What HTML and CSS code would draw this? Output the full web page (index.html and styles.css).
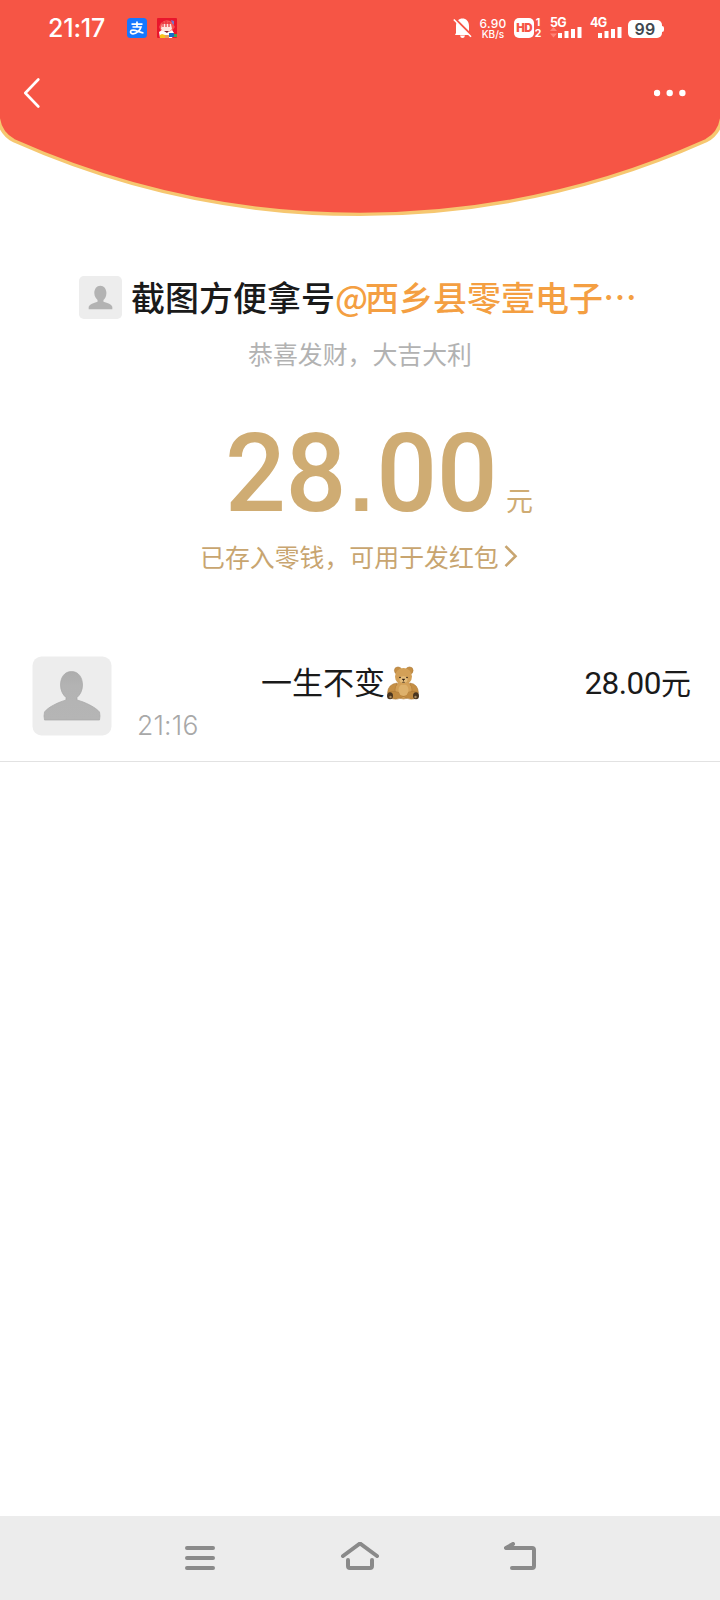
FILE: index.html
```html
<!DOCTYPE html>
<html lang="zh-CN">
<head>
<meta charset="utf-8">
<title>红包详情</title>
<link rel="stylesheet" href="styles.css">
</head>
<body>
<div class="screen">
  <header class="hero">
    <svg class="hero-bg" width="720" height="220" viewBox="0 0 720 220">
      <path d="M-2 -4V116C-1 127 5 136 14 140.800A850 850 0 0 0 706 140.800C715 136 721 127 722 116V-4Z" fill="#f65545" stroke="#f6c770" stroke-width="3.400"/>
    </svg>
    <div class="status">
      <span class="clock">21:17</span>
      <svg class="app" width="20" height="20" viewBox="0 0 20 20"><rect width="20" height="20" rx="3.500" fill="#1677ff"/><path d="M4.500 6.200H15.500M10 3.500V9M5.500 9H14C13 12.500 9.500 15.800 6 15.800C3.500 15.800 3 13.800 4 12.700C6.500 10.300 11 14 16.500 15" fill="none" stroke="#fff" stroke-width="1.700"/></svg>
      <svg class="app app-game" width="20" height="20" viewBox="0 0 20 20"><rect width="20" height="20" rx="1" fill="#e9152c"/><path d="M4 5Q9 0 15 4L18 9L15 13H4L2 9Z" fill="#f55250"/><path d="M14 2l3 1v4l-2-2z" fill="#7875c8"/><path d="M5 6h9l1 5-3 3H7l-3-3z" fill="#ffe5dc"/><path d="M6 4v5M9 3v6M12 4v5" stroke="#e4313a" stroke-width="1.200"/><path d="M2 14l3-2 3 2h4l3-2 2 3-2 5H3z" fill="#fff"/><path d="M7 13h5l-2 2z" fill="#761d2d"/><path d="M3 17l2-1 3 1v3H3z" fill="#f8c31c"/><path d="M12 15h5v4h-5z" fill="#176acb"/><path d="M8 17h4v3H8z" fill="#eaa15e"/><path d="M17 16h3v3h-3z" fill="#45a350"/></svg>
      <span class="grow"></span>
      <svg class="bell" width="20" height="21" viewBox="0 0 20 21"><path d="M3 15V8C3 3 6 .500 9.500 .500S16 3 16 8V14L18.500 17H2Z M7 17.500H12Q11.500 20 9.500 20T7 17.500Z" fill="#fff"/><path d="M1.500 .500L19 18" stroke="#f65545" stroke-width="2.600"/><path d="M.800 1.500L18 18.700" stroke="#fff" stroke-width="1.600"/></svg>
      <span class="speed"><span>6.90</span><span class="unit">KB/s</span></span>
      <span class="hd">HD</span>
      <span class="sims"><span>1</span><span>2</span></span>
      <span class="cell"><span class="gen">5G</span>
        <svg width="32" height="11" viewBox="0 0 32 11"><path d="M0 4L3.500 0L7 4ZM0 6.500L3.500 10.500L7 6.500Z" fill="#ff8376"/><path d="M8 6h4v5H8zM14.500 4h4v7h-4zM21 2h4v9h-4zM27.500 0h4v11h-4z" fill="#fff"/></svg></span>
      <span class="cell"><span class="gen">4G</span>
        <svg width="32" height="11" viewBox="0 0 32 11"><path d="M8 6h4v5H8zM14.500 4h4v7h-4zM21 2h4v9h-4zM27.500 0h4v11h-4z" fill="#fff"/></svg></span>
      <span class="battery">99</span><span class="cap"></span>
    </div>
    <div class="nav">
      <svg width="18" height="32" viewBox="0 0 18 32"><path d="M16.300 2.500L3.300 16L16.300 29.500" fill="none" stroke="#fff" stroke-width="2.600" stroke-linecap="round" stroke-linejoin="round"/></svg>
      <svg width="32" height="8" viewBox="0 0 32 8"><g fill="#fff"><circle cx="3" cy="4" r="3.200"/><circle cx="15.700" cy="4" r="3.200"/><circle cx="28.400" cy="4" r="3.200"/></g></svg>
    </div>
  </header>
  <main>
    <h1 class="sender">
      <svg width="43" height="43" viewBox="0 0 80 80"><rect width="80" height="80" rx="9" fill="#ededed"/><path d="M39.500 18C46.500 18 51 24 51 31.500C51 38 48 42.500 45.500 44.500V48C54 50 60 53 62 57V62H18V57C20 53 27 50 34.500 48V44.500C32 42 28.500 38 28.500 31.500C28.500 24 33 18 39.500 18Z" fill="#b3b3b3"/></svg>
      <span class="who">截图方便拿号</span><span class="at">@</span><span class="corp">西乡县零壹电子…</span>
    </h1>
    <p class="wish">恭喜发财，大吉大利</p>
    <div class="amount"><span class="num">28<span class="dot">.</span>00</span><span class="yuan">元</span></div>
    <div class="saved"><span>已存入零钱，可用于发红包</span><svg width="14" height="23" viewBox="0 0 14 23"><path d="M1.500 1.200L11.500 11.200L1.500 21.200" fill="none" stroke="#c8a570" stroke-width="2.600"/></svg></div>
    <section class="record">
      <svg class="avatar" width="80" height="80" viewBox="0 0 80 80"><defs><linearGradient id="g" x1="0" y1="0" x2="0" y2="1"><stop offset="0" stop-color="#adadad"/><stop offset=".3" stop-color="#b3b3b3"/><stop offset="1" stop-color="#b5b5b5"/></linearGradient></defs><rect x=".5" y=".5" width="79" height="79" rx="9" fill="#ededed"/><path d="M39.500 15.500C46.500 15.500 50.500 21.500 50.500 29C50.500 34.500 48 39 45 41.500V44C53 46 64 51.500 67.500 56Q68.500 60 67.500 64H12.500Q11.500 60 12.500 56C16 51 27 46 34 44V41.500C31 39 28.500 34.500 28.500 29C28.500 21.500 32.500 15.500 39.500 15.500Z" fill="url(#g)" stroke="#a8a8a8" stroke-width=".7"/></svg>
      <span class="time">21:16</span>
      <span class="name">一生不变</span>
      <svg class="bear" width="34" height="34" viewBox="0 0 34 34"><g stroke="#a87532" stroke-width=".5"><circle cx="12" cy="4.500" r="3.600" fill="#c58f45"/><circle cx="23.500" cy="4.500" r="3.600" fill="#c58f45"/><path d="M11 17Q2 18 1.500 27Q4 31 7 28L12 23Z" fill="#c58f45"/><path d="M24 17Q32 18 32.500 27Q30 31 27 28L22 23Z" fill="#c58f45"/><ellipse cx="17.500" cy="24" rx="8.500" ry="9" fill="#d3a057"/><path d="M18 29Q10 24 3 26L4 32Q12 35 18 30Z" fill="#c08a40"/><path d="M17 29Q24 24 31 26L31 32Q23 35 17 30Z" fill="#c08a40"/></g><ellipse cx="17.500" cy="24" rx="5" ry="6" fill="#deb16b"/><ellipse cx="17.500" cy="10.500" rx="8.500" ry="8.500" fill="#d3a057"/><ellipse cx="17.500" cy="13.500" rx="4" ry="3.200" fill="#e3bb7a"/><circle cx="14" cy="11.500" r=".8" fill="#2b1b10"/><circle cx="21" cy="11.500" r=".8" fill="#2b1b10"/><path d="M16 13h3l-1.500 1.500zM17.500 14v1.500M16 16.500q1.500-1 3 0" fill="#2b1b10" stroke="#2b1b10" stroke-width=".4"/><g fill="#49351f"><ellipse cx="4" cy="29.800" rx="3" ry="3.500"/><ellipse cx="30" cy="29.800" rx="3" ry="3.500"/></g><g fill="#a98b60"><circle cx="4.500" cy="31" r="1.200"/><circle cx="29.500" cy="31" r="1.200"/></g></svg>
      <span class="sum"><span class="digits">28.00</span>元</span>
    </section>
  </main>
  <footer class="sysnav">
    <svg width="32" height="32" viewBox="0 0 32 32"><path d="M3 6H29M3 16H29M3 26H29"/></svg>
    <svg width="40" height="32" viewBox="0 0 40 32"><path d="M3 14L20 1.500L37 14M8 18V24Q8 26 10 26H30Q32 26 32 24V18"/></svg>
    <svg width="34" height="32" viewBox="0 0 34 32"><path d="M9 2L2 6H28Q30 6 30 8V24Q30 26 28 26H8"/></svg>
  </footer>
</div>
</body>
</html>
```
FILE: styles.css
```css
* { box-sizing: border-box; }
body { margin: 0; background: #fff; font-family: "Noto Sans CJK SC", sans-serif; }
h1, p { margin: 0; font-weight: 400; }
svg { display: block; flex: none; }
.screen { width: 720px; height: 1600px; display: flex; flex-direction: column; overflow: hidden; white-space: nowrap; }
.hero { position: relative; height: 220px; flex: none; color: #fff; }
.hero-bg { position: absolute; left: 0; top: 0; }
.status { position: relative; display: flex; align-items: flex-start; height: 56px; padding: 18px 56px 0 48px; font-family: Inter, sans-serif; }
.clock { width: 79px; font-size: 25px; line-height: 21px; font-weight: 500; letter-spacing: -.2px; }
.app-game { margin-left: 10px; }
.grow { flex: 1; }
.bell { margin-right: 5px; }
.speed { width: 30px; display: flex; flex-direction: column; align-items: center; font-size: 12px; line-height: 11px; font-weight: 500; letter-spacing: .2px; }
.speed .unit { font-size: 10px; line-height: 11px; letter-spacing: 0; }
.hd { margin-left: 6px; width: 20px; height: 20px; border-radius: 5px; background: #fff; color: #f65545; font: 900 11.5px/20px Inter, sans-serif; letter-spacing: -.6px; text-align: center; }
.sims { width: 8px; display: flex; flex-direction: column; align-items: center; font-size: 10.5px; line-height: 11px; font-weight: 700; margin-top: -1px; }
.cell { margin-left: 8px; width: 32px; height: 20px; display: flex; flex-direction: column; }
.gen { height: 9px; font-size: 12.5px; line-height: 10px; font-weight: 700; letter-spacing: -.8px; }
.battery { margin: 2px 0 0 6px; width: 34px; height: 18px; border-radius: 5px; background: #fff; color: #414850; font-size: 16px; line-height: 19px; font-weight: 600; letter-spacing: .3px; text-align: center; }
.cap { width: 2px; height: 6px; margin-top: 8px; background: #fff; border-radius: 0 2px 2px 0; }
.nav { position: relative; display: flex; justify-content: space-between; align-items: center; padding: 21px 34px 0 22px; }
main { flex: 1; }
.sender { display: flex; align-items: center; height: 44px; margin-top: 55px; padding-left: 79px; font-size: 34px; line-height: 44px; font-weight: 500; color: #1a1a1a; }
.who { margin-left: 9px; }
.at { width: 30px; color: #f49f42; }
.corp { color: #f49f42; }
.wish { margin-top: 16px; text-align: center; font-size: 24.9px; line-height: 36px; font-weight: 400; color: #b2b2b2; }
.amount { display: flex; align-items: baseline; height: 130px; margin-top: 38px; padding-left: 225px; color: #cfac73; }
.num { width: 281px; font: 500 110px/130px Roboto, sans-serif; letter-spacing: -.5px; transform: scaleX(.975); transform-origin: 0 0; }
.dot { display: inline-block; width: 31px; font: 700 86px/100px "Liberation Sans", sans-serif; text-align: center; }
.yuan { font-size: 27px; line-height: 30px; }
.saved { display: flex; align-items: center; gap: 5px; height: 36px; padding-left: 200px; margin-top: -1px; font-size: 24.9px; line-height: 36px; color: #c8a570; }
.record { display: grid; grid-template-columns: 105px 124px 125px 33px 1fr; grid-template-rows: 50px 30px; height: 106px; margin-top: 82px; padding: 0 29px 0 32px; border-bottom: 1px solid #e2e2e2; color: #1a1a1a; }
.avatar { grid-column: 1; grid-row: 1 / 3; }
.time { grid-column: 2; grid-row: 2; font: 300 26.5px/38px Inter, sans-serif; letter-spacing: .2px; color: #a8a8a8; }
.name { grid-column: 3; grid-row: 1; font-size: 31px; line-height: 50px; }
.bear { grid-column: 4; grid-row: 1; margin-top: 10px; }
.sum { grid-column: 5; grid-row: 1; text-align: right; font-size: 30px; line-height: 50px; }
.digits { font-family: Roboto, sans-serif; font-size: 31.5px; letter-spacing: -.5px; }
.sysnav { flex: none; display: flex; height: 84px; padding: 26px 182px 0 184px; justify-content: space-between; background: #ececec; }
.sysnav path { fill: none; stroke: #8a8a8a; stroke-width: 4; stroke-linecap: round; stroke-linejoin: round; }
```
